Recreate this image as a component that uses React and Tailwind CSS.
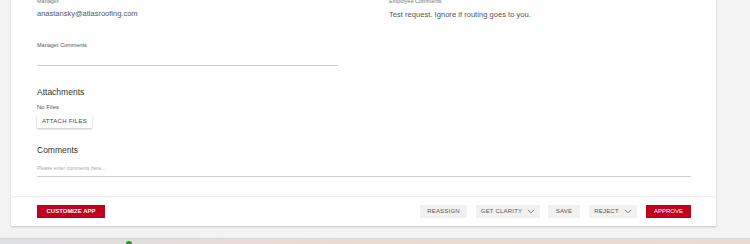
import React from 'react';

const font = { fontFamily: '"Liberation Sans", Arial, sans-serif' };

const Chevron = () => (
    <svg width="8" height="5" viewBox="0 0 8 5" className="ml-[5px]">
        <path d="M0.8 0.8 L4 3.8 L7.2 0.8" fill="none" stroke="#666" strokeWidth="0.8" />
    </svg>
);

const GrayButton = ({ children, className = '', chevron }) => (
    <button className={`h-[13px] flex items-center justify-center bg-[#f1f1f1] text-[#555] text-[6px] tracking-[0.2px] ${className}`}>
        {children}
        {chevron && <Chevron />}
    </button>
);

const App = () => {
    return (
        <div className="w-[750px] h-[244px] overflow-hidden bg-[#f3f3f3] flex flex-col" style={font}>
            {/* Card */}
            <div className="ml-[11px] w-[705px] h-[226px] bg-white shadow-[0_1px_2px_rgba(0,0,0,0.18)] flex flex-col">
                <div className="flex-1 pl-[26px] pr-[25px] -mt-[1px] flex flex-col">
                    {/* Manager / employee row */}
                    <div className="flex">
                        <div className="w-[352px]">
                            <div className="text-[5.5px] leading-[7px] text-[#777] -mt-[1px]">Manager</div>
                            <div className="mt-[4px] text-[7.5px] leading-[10px] text-[#555]">anastansky@atlasroofing.com</div>
                        </div>
                        <div>
                            <div className="text-[5.5px] leading-[7px] text-[#777] -mt-[1px]">Employee Comments</div>
                            <div className="mt-[5px] text-[7.6px] leading-[10px] text-[#555]">Test request. Ignore if routing goes to you.</div>
                        </div>
                    </div>

                    {/* Manager comments */}
                    <div className="mt-[22px] w-[301px]">
                        <div className="text-[5.5px] leading-[7px] text-[#555]">Manager Comments</div>
                        <div className="mt-[16px] h-px bg-[#cfcfcf]"></div>
                    </div>

                    {/* Attachments */}
                    <div className="mt-[21px] text-[8.5px] leading-[11px] text-[#333]">Attachments</div>
                    <div className="mt-[5px] text-[6px] leading-[8px] text-[#555]">No Files</div>
                    <button className="mt-[4px] w-[55px] h-[13px] bg-white text-[6px] tracking-[0.3px] text-[#444] shadow-[0_1px_2px_rgba(0,0,0,0.25)]">
                        ATTACH FILES
                    </button>

                    {/* Comments */}
                    <div className="mt-[17px] text-[8.5px] leading-[11px] text-[#333]">Comments</div>
                    <div className="mt-[9px] text-[5px] leading-[7px] text-[#aaa]">Please enter comments here...</div>
                    <div className="mt-[4px] h-px bg-[#cfcfcf]"></div>
                </div>

                {/* Footer */}
                <div className="h-[30px] border-t border-[#ececec] pl-[26px] pr-[25px] flex items-center">
                    <button className="w-[68px] h-[13px] bg-[#c0001e] text-white text-[6px] font-bold">
                        CUSTOMIZE APP
                    </button>
                    <div className="ml-auto flex items-center gap-[8px]">
                        <GrayButton className="w-[47px]">REASSIGN</GrayButton>
                        <GrayButton className="w-[64px] ml-[1px]" chevron>GET CLARITY</GrayButton>
                        <GrayButton className="w-[32px]">SAVE</GrayButton>
                        <GrayButton className="w-[48px] ml-[1px]" chevron>REJECT</GrayButton>
                        <button className="w-[45px] h-[13px] bg-[#c0001e] text-white text-[6px] ml-[1px]">
                            APPROVE
                        </button>
                    </div>
                </div>
            </div>

            {/* Taskbar strip */}
            <div className="mt-auto h-[6px] bg-gradient-to-r from-[#dfe0e4] via-[#ead9cf] to-[#e6dbd3] border-t border-[#d6d6d6] relative">
                <div className="absolute left-[126px] top-[2px] w-[6px] h-[6px] rounded-full bg-[#1a9c2a]"></div>
            </div>
        </div>
    );
};

export default App;
